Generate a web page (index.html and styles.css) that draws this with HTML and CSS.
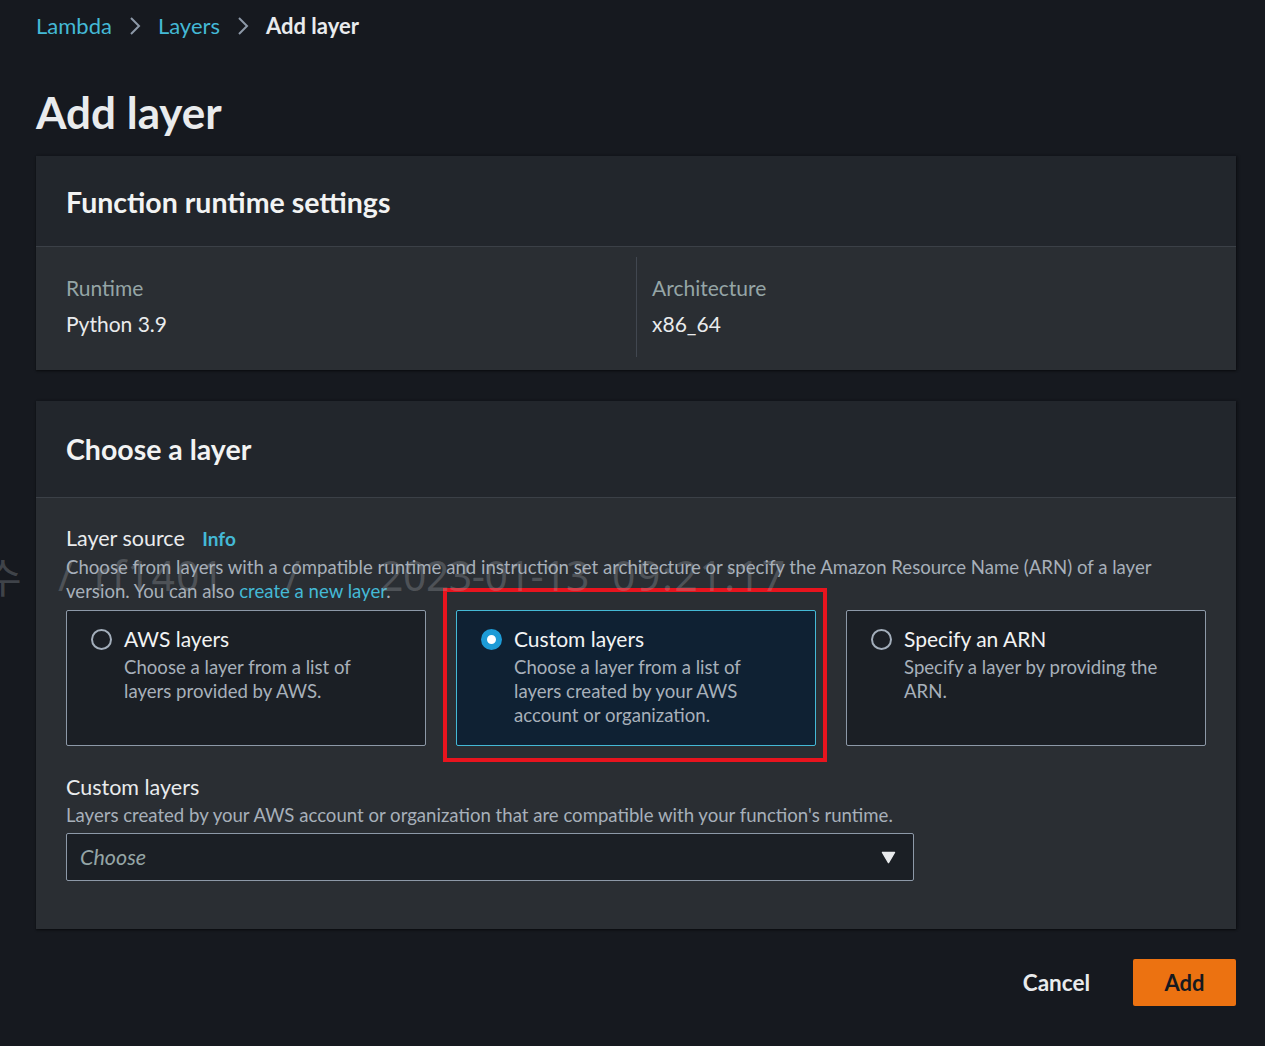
FILE: index.html
```html
<!DOCTYPE html>
<html lang="en">
<head>
<meta charset="utf-8">
<title>Add layer</title>
<link rel="stylesheet" href="styles.css">
</head>
<body>
<div class="page">
  <nav class="crumbs">
    <a class="crumb-link">Lambda</a>
    <svg class="chev" viewBox="0 0 12 20" width="12" height="20"><path d="M2 2 L10 10 L2 18" fill="none" stroke="#8d99a8" stroke-width="2"/></svg>
    <a class="crumb-link">Layers</a>
    <svg class="chev" viewBox="0 0 12 20" width="12" height="20"><path d="M2 2 L10 10 L2 18" fill="none" stroke="#8d99a8" stroke-width="2"/></svg>
    <span class="crumb-current">Add layer</span>
  </nav>

  <h1 class="title">Add layer</h1>

  <section class="panel">
    <div class="panel-head panel-head-1"><h2>Function runtime settings</h2></div>
    <div class="panel-body kv">
      <div class="kv-col">
        <div class="kv-label">Runtime</div>
        <div class="kv-value">Python 3.9</div>
      </div>
      <div class="kv-col kv-col-2">
        <div class="kv-label">Architecture</div>
        <div class="kv-value">x86_64</div>
      </div>
    </div>
  </section>

  <section class="panel panel-2">
    <div class="panel-head panel-head-2"><h2>Choose a layer</h2></div>
    <div class="panel-body form">
      <div class="field-label">Layer source <a class="info">Info</a></div>
      <div class="field-desc">Choose from layers with a compatible runtime and instruction set architecture or specify the Amazon Resource Name (ARN) of a layer version. You can also <a class="link">create a new layer</a>.</div>

      <div class="tiles">
        <div class="tile">
          <span class="radio"></span>
          <div class="tile-text">
            <div class="tile-title">AWS layers</div>
            <div class="tile-desc">Choose a layer from a list of layers provided by AWS.</div>
          </div>
        </div>
        <div class="tile tile-on">
          <span class="radio radio-on"></span>
          <div class="tile-text">
            <div class="tile-title">Custom layers</div>
            <div class="tile-desc">Choose a layer from a list of layers created by your AWS account or organization.</div>
          </div>
          <div class="highlight"></div>
        </div>
        <div class="tile">
          <span class="radio"></span>
          <div class="tile-text">
            <div class="tile-title">Specify an ARN</div>
            <div class="tile-desc">Specify a layer by providing the ARN.</div>
          </div>
        </div>
      </div>

      <div class="field-label field-label-2">Custom layers</div>
      <div class="field-desc">Layers created by your AWS account or organization that are compatible with your function's runtime.</div>
      <div class="select">
        <span class="placeholder">Choose</span>
        <svg class="caret" viewBox="0 0 16 14" width="15" height="13"><path d="M1.5 1.5 H14.5 L8 12.5 Z" fill="#e9ebed" stroke="#e9ebed" stroke-width="1.5" stroke-linejoin="round"/></svg>
      </div>
    </div>
  </section>

  <div class="actions">
    <button class="btn-cancel">Cancel</button>
    <button class="btn-add">Add</button>
  </div>

  <div class="watermark">
    <span class="wm wm-1">수</span>
    <span class="wm wm-2">/</span>
    <span class="wm wm-3">rf1401</span>
    <span class="wm wm-4">/</span>
    <span class="wm wm-5">2023-01-13</span>
    <span class="wm wm-6">09:21:17</span>
  </div>
</div>
</body>
</html>
```

FILE: styles.css
```css
* { box-sizing: border-box; }
html, body { margin: 0; padding: 0; }
body {
  background: #16191f;
  color: #d1d5db;
  font-family: Lato, "Noto Sans", "Liberation Sans", sans-serif;
  width: 1265px;
  height: 1046px;
  overflow: hidden;
}
.page {
  position: relative;
  padding: 14px 29px 0 36px;
  height: 1046px;
}
.crumbs {
  display: flex;
  align-items: center;
  gap: 15px;
  height: 24px;
  font-size: 22px;
  line-height: 24px;
}
.crumb-link { color: #44b9d6; }
.crumb-current { color: #e9ebed; font-weight: 700; }
.chev { display: block; margin: 0 2px; }

.title {
  margin: 50px 0 20px;
  font-size: 44px;
  line-height: 48px;
  font-weight: 700;
  color: #e9ebed;
}

.panel {
  background: #2a2e33;
  box-shadow: 0 1px 2px rgba(0,0,0,0.5), 2px 0 3px rgba(0,0,0,0.25);
}
.panel-2 { margin-top: 31px; }
.panel-head {
  background: #22262c;
  border-bottom: 1px solid #3b4047;
  padding: 0 30px;
  display: flex;
  align-items: center;
}
.panel-head-1 { height: 91px; padding-top: 1px; }
.panel-head-2 { height: 97px; }
.panel-head h2 {
  margin: 0;
  font-size: 28.5px;
  line-height: 32px;
  font-weight: 700;
  color: #f2f3f3;
}

.kv {
  display: grid;
  grid-template-columns: 1fr 1fr;
  padding: 10px 30px 13px;
}
.kv-col { padding: 18px 0 20px; }
.kv-col-2 { border-left: 1px solid #414750; padding-left: 15px; }
.kv-label { font-size: 21px; line-height: 26px; color: #95a5a6; }
.kv-value { font-size: 21px; line-height: 26px; margin-top: 10px; color: #e9ebed; }

.form { padding: 27px 30px 48px; }
.field-label {
  font-size: 21.5px;
  line-height: 26px;
  color: #e9ebed;
}
.field-label-2 { margin-top: 28px; }
.info {
  color: #44b9d6;
  font-weight: 700;
  font-size: 19px;
  margin-left: 12px;
}
.field-desc {
  margin-top: 3px;
  font-size: 18.6px;
  line-height: 24px;
  color: #a7b0ba;
}
.link { color: #44b9d6; }

.tiles {
  display: grid;
  grid-template-columns: 360px 360px 360px;
  gap: 30px;
  margin-top: 7px;
}
.tile {
  position: relative;
  height: 136px;
  background: #1b1f25;
  border: 1px solid #8d99a8;
  border-radius: 2px;
  padding: 15px 38px 0 24px;
  display: flex;
  gap: 12px;
}
.tile-on {
  background: #0f2133;
  border-color: #44b9d6;
}
.radio {
  flex: none;
  width: 21px;
  height: 21px;
  margin-top: 3px;
  border-radius: 50%;
  border: 2px solid #a3aebb;
}
.radio-on {
  border: 6px solid #1d9bd6;
  background: #ffffff;
}
.tile-title {
  font-size: 21px;
  line-height: 26px;
  color: #f2f3f3;
}
.tile-desc {
  margin-top: 3px;
  font-size: 18.6px;
  line-height: 24px;
  color: #a7b0ba;
}
.highlight {
  position: absolute;
  left: -14px;
  top: -23px;
  right: -12px;
  bottom: -17px;
  border: 4px solid #e8141e;
  pointer-events: none;
}

.select {
  margin-top: 6px;
  width: 848px;
  height: 48px;
  background: #1b1f25;
  border: 1px solid #8d99a8;
  border-radius: 2px;
  display: flex;
  align-items: center;
  justify-content: space-between;
  padding: 0 17px 0 13px;
}
.placeholder {
  font-style: italic;
  font-size: 21.5px;
  color: #95a5a6;
}
.caret { display: block; }

.actions {
  display: flex;
  justify-content: flex-end;
  align-items: center;
  gap: 43px;
  margin-top: 30px;
}
.btn-cancel {
  background: none;
  border: none;
  padding: 0;
  font-family: inherit;
  font-size: 22.5px;
  font-weight: 700;
  color: #e9ebed;
}
.btn-add {
  width: 103px;
  height: 47px;
  background: #ec7211;
  border: none;
  border-radius: 2px;
  font-family: inherit;
  font-size: 22px;
  font-weight: 700;
  color: #16191f;
}

.watermark {
  position: absolute;
  left: 0;
  top: 550px;
  width: 820px;
  height: 50px;
  font-family: "Noto Sans", "Noto Sans CJK KR", sans-serif;
  font-size: 41px;
  line-height: 50px;
  color: rgba(170, 175, 182, 0.28);
  white-space: nowrap;
  pointer-events: none;
}
.wm { position: absolute; top: 0; }
.wm-1 { left: -16px; font-family: "Noto Sans CJK KR", sans-serif; }
.wm-2 { left: 58px; }
.wm-3 { left: 94px; letter-spacing: 1px; }
.wm-4 { left: 285px; }
.wm-5 { left: 380px; letter-spacing: -0.5px; }
.wm-6 { left: 612px; letter-spacing: 1.5px; }
```
